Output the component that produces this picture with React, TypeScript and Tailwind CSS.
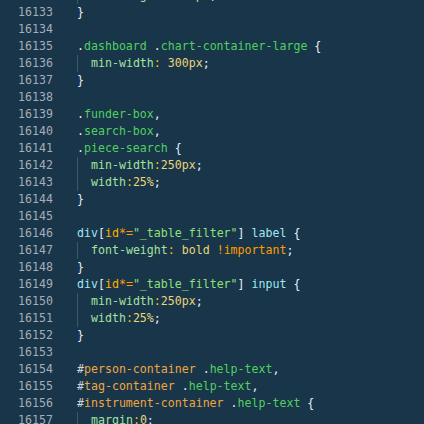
import React from "react";

type Tok = [string, string];

const C = {
  brace: "text-[#e1efff]",
  cls: "text-[#4fd160]",
  prop: "text-[#a3e3a0]",
  colon: "text-[#ffc600]",
  val: "text-[#e8d67a]",
  imp: "text-[#ff9d00]",
  tag: "text-[#9ee8f2]",
  attr: "text-[#ffb000]",
  op: "text-[#ff9d00]",
  str: "text-[#8ee07a]",
  id: "text-[#f0a640]",
  hash: "text-[#c9d4de]",
  punct: "text-[#e1efff]",
};

type Line = { n: number; toks: Tok[]; guide?: boolean };

const lines: Line[] = [
  { n: 16132, guide: true, toks: [[C.prop, "max-height"], [C.colon, ":"], [C.punct, " "], [C.val, "100px"], [C.punct, ";"]] },
  { n: 16133, toks: [[C.brace, "}"]] },
  { n: 16134, toks: [] },
  { n: 16135, toks: [[C.punct, "."], [C.cls, "dashboard"], [C.punct, " ."], [C.cls, "chart-container-large"], [C.brace, " {"]] },
  { n: 16136, guide: true, toks: [[C.prop, "min-width"], [C.colon, ":"], [C.punct, " "], [C.val, "300px"], [C.punct, ";"]] },
  { n: 16137, toks: [[C.brace, "}"]] },
  { n: 16138, toks: [] },
  { n: 16139, toks: [[C.punct, "."], [C.cls, "funder-box"], [C.punct, ","]] },
  { n: 16140, toks: [[C.punct, "."], [C.cls, "search-box"], [C.punct, ","]] },
  { n: 16141, toks: [[C.punct, "."], [C.cls, "piece-search"], [C.brace, " {"]] },
  { n: 16142, guide: true, toks: [[C.prop, "min-width"], [C.colon, ":"], [C.val, "250px"], [C.punct, ";"]] },
  { n: 16143, guide: true, toks: [[C.prop, "width"], [C.colon, ":"], [C.val, "25%"], [C.punct, ";"]] },
  { n: 16144, toks: [[C.brace, "}"]] },
  { n: 16145, toks: [] },
  { n: 16146, toks: [[C.tag, "div"], [C.punct, "["], [C.attr, "id"], [C.op, "*="], [C.str, "\"_table_filter\""], [C.punct, "]"], [C.punct, " "], [C.tag, "label"], [C.brace, " {"]] },
  { n: 16147, guide: true, toks: [[C.prop, "font-weight"], [C.colon, ":"], [C.punct, " "], [C.val, "bold"], [C.punct, " "], [C.imp, "!important"], [C.punct, ";"]] },
  { n: 16148, toks: [[C.brace, "}"]] },
  { n: 16149, toks: [[C.tag, "div"], [C.punct, "["], [C.attr, "id"], [C.op, "*="], [C.str, "\"_table_filter\""], [C.punct, "]"], [C.punct, " "], [C.tag, "input"], [C.brace, " {"]] },
  { n: 16150, guide: true, toks: [[C.prop, "min-width"], [C.colon, ":"], [C.val, "250px"], [C.punct, ";"]] },
  { n: 16151, guide: true, toks: [[C.prop, "width"], [C.colon, ":"], [C.val, "25%"], [C.punct, ";"]] },
  { n: 16152, toks: [[C.brace, "}"]] },
  { n: 16153, toks: [] },
  { n: 16154, toks: [[C.hash, "#"], [C.id, "person-container"], [C.punct, " ."], [C.cls, "help-text"], [C.punct, ","]] },
  { n: 16155, toks: [[C.hash, "#"], [C.id, "tag-container"], [C.punct, " ."], [C.cls, "help-text"], [C.punct, ","]] },
  { n: 16156, toks: [[C.hash, "#"], [C.id, "instrument-container"], [C.punct, " ."], [C.cls, "help-text"], [C.brace, " {"]] },
  { n: 16157, guide: true, toks: [[C.prop, "margin"], [C.colon, ":"], [C.val, "0"], [C.punct, ";"]] },
];

export default function App() {
  return (
    <div
      className="w-[424px] h-[424px] overflow-hidden bg-[#193549] text-[11.6px] leading-[17px] whitespace-pre"
      style={{ fontFamily: '"DejaVu Sans Mono", monospace' }}
    >
      <div className="mt-[-13px] flex flex-col">
        {lines.map((l) => (
          <div key={l.n} className="flex h-[17px]">
            <div className="w-[53px] text-right text-[#a4aeb8]">{l.n}</div>
            <div className="ml-[24px] flex">
              {l.guide ? (
                <>
                  <span className="w-[14px] border-l border-[#3b586e]"></span>
                  {l.toks.map((t, i) => (
                    <span key={i} className={t[0]}>{t[1]}</span>
                  ))}
                </>
              ) : (
                l.toks.map((t, i) => (
                  <span key={i} className={t[0]}>{t[1]}</span>
                ))
              )}
            </div>
          </div>
        ))}
      </div>
    </div>
  );
}
